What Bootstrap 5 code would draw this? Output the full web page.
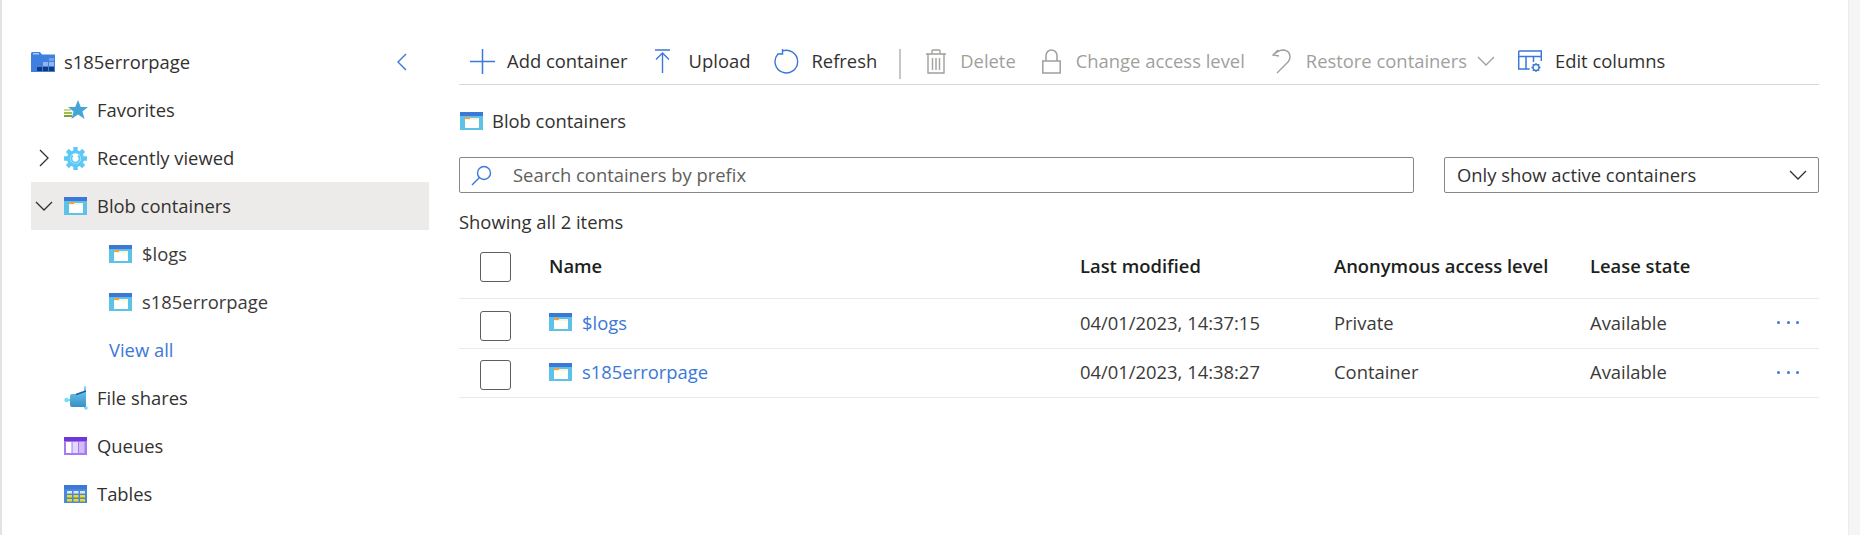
<!DOCTYPE html>
<html lang="en"><head><meta charset="utf-8"><title>Blob containers</title>
<link href="https://cdn.jsdelivr.net/npm/bootstrap@5.3.0/dist/css/bootstrap.min.css" rel="stylesheet">
<style>
html,body{height:100%}
body{font-family:"Open Sans","Noto Sans","Liberation Sans",sans-serif;font-size:18.4px;color:#323130;background:#fff;overflow:hidden}
.shell{height:535px;border-left:2px solid #e3e3e3;border-right:11px solid #f5f5f5;box-shadow:inset -1px 0 #ececec}
.side{width:398px;margin-left:29px;padding-top:38px;flex:none}
.side-row{height:48px}
.side-row svg.ic{flex:none}
.caret{width:33px;flex:none;display:flex;justify-content:center;padding-right:7px}
.lbl{margin-left:10px;color:#323130}
.lbl-wide{margin-left:9px}
.head-lbl{margin-left:9px}
.lv2{padding-left:78px}
.lv2 .lbl{color:#3b3a39}
.sel{background:#edebe9}
.blue{color:#3b78d8;text-decoration:none}
.main{width:1360px;margin-left:30px;flex:none}
.tbar{height:85px;border-bottom:1px solid #d8d8d8;padding-top:42px;padding-left:11px}
.tb{display:flex;align-items:center;height:38px;white-space:nowrap;color:#323130}
.off{color:#a19f9d}
.vsep{width:2px;height:30px;background:#c8c6c4;flex:none;margin:7px 0 0 22px}
.crumb{height:72px}
.crumb svg{margin-left:1px}
.crumb span{margin-left:9px}
.fieldbox{height:36px;border:1px solid #8a8886;border-radius:2px;background:#fff}
.srch{width:955px;padding-left:11px}
.srch span{color:#605e5c;margin-left:21px}
.drop{width:375px;margin-left:30px;padding:0 11px 0 12px}
.count{height:50px;padding-top:15px}
.gridrow{display:grid;grid-template-columns:90px 531px 254px 256px 187px 42px;align-items:center;border-bottom:1px solid #edebe9}
.ghead{height:56px;font-weight:600;padding-bottom:7px}
.grow1{height:50px}
.grow2{height:49px}
.gridrow>div{white-space:nowrap;color:#3b3a39}
.gridrow>div:not(:first-child){padding-bottom:2px}
.ghead>div{color:#201f1e}
.chk{width:31px;height:30px;border:1px solid #605e5c;border-radius:3px;margin-left:21px;display:block}
.grow1 .chk,.grow2 .chk{margin-top:4px}
.gridrow>.dots{display:flex;gap:6.500px;align-items:flex-start;padding-bottom:4px}
.dots i{width:3px;height:3px;border-radius:50%;background:#3b78d8;display:block}
</style></head><body>
<svg width="0" height="0" class="d-block" aria-hidden="true"><defs>
<symbol id="blob" viewBox="0 0 23 18"><rect width="23" height="18" fill="#5cc2e8"/><rect width="23" height="4" fill="#3b78d8"/><rect x="5" y="6" width="14" height="10" fill="#fff"/><rect x="5" y="6" width="14" height="2" fill="#fdf3d8"/><rect x="5" y="5" width="5" height="2" fill="#f2a33a"/></symbol>
<linearGradient id="fsg" x1="0" y1="0" x2="0" y2="1"><stop offset="0" stop-color="#62c3ec"/><stop offset="1" stop-color="#3a8fc4"/></linearGradient>
</defs></svg>
<div class="shell d-flex">
 <aside class="side">
  <div class="side-row d-flex align-items-center">
   <svg class="ic" width="24" height="20" viewBox="0 0 24 20"><path d="M0 1.500Q0 0 1.500 0H9l2 2.500H24V20H0z" fill="#3f7fe0"/><rect x="2" y="1" width="6" height="1.500" fill="#a9cbf5"/><rect x="6" y="15" width="5" height="4" fill="#123a78"/><rect x="12" y="15" width="5" height="4" fill="#123a78"/><rect x="18" y="15" width="5" height="4" fill="#123a78"/><rect x="12" y="10" width="5" height="4" fill="#8fb6ee"/><rect x="18" y="10" width="5" height="4" fill="#8fb6ee"/><rect x="18" y="6" width="5" height="3" fill="#6fa0e8"/></svg>
   <span class="head-lbl">s185errorpage</span>
   <svg class="ms-auto" width="11" height="18" viewBox="0 0 11 18" style="margin-right:22px"><path d="M10 1 2 9l8 8" fill="none" stroke="#3b78d8" stroke-width="1.400"/></svg>
  </div>
  <div class="side-row d-flex align-items-center">
   <span class="caret"></span><svg class="ic" width="24" height="20" viewBox="0 0 24 20"><path d="M14 0l2.800 7H24l-5.600 4.600 2.200 7.400-6.600-4.400L7.400 19l2.200-7.400L4 7h7.200z" fill="#46a5d6"/><rect x="0" y="9" width="7" height="2" fill="#c8dc8c"/><rect x="0" y="12" width="8" height="2" fill="#9cc04e"/><rect x="0" y="15" width="8" height="2" fill="#7fa03a"/></svg><span class="lbl lbl-wide">Favorites</span>
  </div>
  <div class="side-row d-flex align-items-center">
   <span class="caret"><svg width="11" height="18" viewBox="0 0 11 18"><path d="M1 1l8 8-8 8" fill="none" stroke="#323130" stroke-width="1.300"/></svg></span><svg class="ic" width="23" height="23" viewBox="0 0 24 24"><g stroke="#5cc8f5" stroke-width="4.500"><path d="M12 0v24M0 12h24M3.500 3.500l17 17M20.500 3.500l-17 17"/></g><circle cx="12" cy="12" r="9" fill="#5cc8f5"/><circle cx="12" cy="12" r="5.600" fill="#fff"/><path d="M9.200 8.800a4.300 4.300 0 1 0 5.600 0" fill="none" stroke="#5cc8f5" stroke-width="2"/></svg><span class="lbl">Recently viewed</span>
  </div>
  <div class="side-row sel d-flex align-items-center">
   <span class="caret"><svg width="18" height="11" viewBox="0 0 18 11" class="flex-shrink-0"><path d="M1 1l8 8 8-8" fill="none" stroke="#323130" stroke-width="1.300"/></svg></span><svg class="ic" width="23" height="18"><use href="#blob"/></svg><span class="lbl">Blob containers</span>
  </div>
  <div class="side-row lv2 d-flex align-items-center"><svg class="ic" width="23" height="18"><use href="#blob"/></svg><span class="lbl">$logs</span></div>
  <div class="side-row lv2 d-flex align-items-center"><svg class="ic" width="23" height="18"><use href="#blob"/></svg><span class="lbl">s185errorpage</span></div>
  <div class="side-row lv2 d-flex align-items-center"><a class="blue" href="#">View all</a></div>
  <div class="side-row d-flex align-items-center">
   <span class="caret"></span><svg class="ic" width="24" height="24" viewBox="0 0 24 24"><path d="M2.500 14H7" stroke="#2a8fc8" stroke-width="1"/><path d="M21 2v5M21 20v2" stroke="#2a6fb0" stroke-width="1"/><path d="M6 10q0-2 2-2h5l9-3v16H8q-2 0-2-2z" fill="url(#fsg)"/><path d="M12 8.500l10-3.500" stroke="#1c5fa8" stroke-width="1.500"/><circle cx="2.500" cy="14" r="2.200" fill="#6fdcf8"/><circle cx="22" cy="22" r="1.800" fill="#6fdcf8"/><circle cx="21" cy="1.500" r="1.300" fill="#6fdcf8"/></svg><span class="lbl lbl-wide">File shares</span>
  </div>
  <div class="side-row d-flex align-items-center">
   <span class="caret"></span><svg class="ic" width="23" height="18" viewBox="0 0 23 18"><rect width="23" height="18" fill="#a67af0"/><rect width="23" height="4" fill="#6f36d8"/><rect x="2" y="5" width="5.500" height="11" fill="#fff"/><rect x="8.500" y="5" width="5.500" height="11" fill="#e4d8fb"/><rect x="15" y="5" width="5.500" height="11" fill="#d0bdf7"/></svg><span class="lbl">Queues</span>
  </div>
  <div class="side-row d-flex align-items-center">
   <span class="caret"></span><svg class="ic" width="23" height="18" viewBox="0 0 23 18"><rect width="23" height="18" fill="#4a88dc"/><rect width="23" height="4" fill="#3b78d8"/><g fill="#dbe8fa"><rect x="3" y="6" width="5" height="2.500"/><rect x="9.500" y="6" width="5" height="2.500"/><rect x="16" y="6" width="5" height="2.500"/></g><g fill="#f5d90a"><rect x="3" y="10" width="5" height="2.500"/><rect x="9.500" y="10" width="5" height="2.500"/><rect x="16" y="10" width="5" height="2.500"/><rect x="3" y="14" width="5" height="2.500"/><rect x="9.500" y="14" width="5" height="2.500"/><rect x="16" y="14" width="5" height="2.500"/></g></svg><span class="lbl">Tables</span>
  </div>
 </aside>
 <main class="main">
  <div class="tbar d-flex align-items-start">
   <div class="tb"><svg width="25" height="25" viewBox="0 0 25 25"><path d="M12.500 0v25M0 12.500h25" stroke="#3b78d8" stroke-width="1.500"/></svg><span class="ms-2 ps-1">Add container</span></div>
   <div class="tb" style="margin-left:27px"><svg width="15" height="25" viewBox="0 0 15 25"><path d="M0 1h15M7.500 24V4M1 10.500l6.500-6.500 6.500 6.500" fill="none" stroke="#3b78d8" stroke-width="1.400"/></svg><span style="margin-left:19px">Upload</span></div>
   <div class="tb" style="margin-left:24px"><svg width="25" height="25" viewBox="0 0 25 25"><path d="M8 2.200a11.300 11.300 0 1 1-4 2.800M8.500 0v5H3.500" fill="none" stroke="#3b78d8" stroke-width="1.400"/></svg><span style="margin-left:12px">Refresh</span></div>
   <div class="vsep"></div>
   <div class="tb off" style="margin-left:25px"><svg width="20" height="25" viewBox="0 0 20 25"><path d="M0 5h20M6 5V2q0-1 1-1h6q1 0 1 1v3M2 5v19h16V5M6.500 9v12M10 9v12M13.500 9v12" fill="none" stroke="#a19f9d" stroke-width="1.400"/></svg><span style="margin-left:14px">Delete</span></div>
   <div class="tb off" style="margin-left:26px"><svg width="19" height="25" viewBox="0 0 19 25"><path d="M.8 12h17.400v12H.8zM4 12V6.500a5.500 5.500 0 0 1 11 0V12" fill="none" stroke="#a19f9d" stroke-width="1.500"/></svg><span style="margin-left:15px">Change access level</span></div>
   <div class="tb off" style="margin-left:27px"><svg width="19" height="25" viewBox="0 0 19 25"><path d="M6 1L1 6l6 1M1 6q5-5 11-5 6 1 6 7 0 3-2 5L5 24" fill="none" stroke="#a19f9d" stroke-width="1.400"/></svg><span style="margin-left:15px">Restore containers</span><svg style="margin-left:10px" width="18" height="10" viewBox="0 0 18 10"><path d="M1 1l8 8 8-8" fill="none" stroke="#a19f9d" stroke-width="1.300"/></svg></div>
   <div class="tb" style="margin-left:23px"><svg width="24" height="23" viewBox="0 0 24 23"><path d="M.7 1h22.600v10M.7 1v18h11M.7 6.500h22.600M8 6.500V19M15.500 6.500V12" fill="none" stroke="#3b78d8" stroke-width="1.500"/><path d="M18 13v9M13.500 17.500h9M14.800 14.300l6.400 6.400M21.200 14.300l-6.400 6.400" stroke="#3b78d8" stroke-width="1.300"/><circle cx="18" cy="17.500" r="3" fill="#fff" stroke="#3b78d8" stroke-width="1.400"/></svg><span style="margin-left:13px">Edit columns</span></div>
  </div>
  <div class="crumb d-flex align-items-center"><svg width="23" height="18"><use href="#blob"/></svg><span>Blob containers</span></div>
  <div class="d-flex">
   <div class="fieldbox srch d-flex align-items-center"><svg width="21" height="21" viewBox="0 0 21 21"><circle cx="13" cy="8" r="6.500" fill="none" stroke="#3b78d8" stroke-width="1.400"/><path d="M8.500 12.500L1 20" stroke="#3b78d8" stroke-width="1.500"/></svg><span>Search containers by prefix</span></div>
   <div class="fieldbox drop d-flex align-items-center justify-content-between"><span>Only show active containers</span><svg width="18" height="10" viewBox="0 0 18 10"><path d="M1 1l8 8 8-8" fill="none" stroke="#323130" stroke-width="1.300"/></svg></div>
  </div>
  <div class="count">Showing all 2 items</div>
  <div class="gridrow ghead"><div><span class="chk"></span></div><div>Name</div><div>Last modified</div><div>Anonymous access level</div><div>Lease state</div><div></div></div>
  <div class="gridrow grow1"><div><span class="chk"></span></div><div class="d-flex align-items-center"><svg width="23" height="18"><use href="#blob"/></svg><a class="blue" href="#" style="margin-left:10px">$logs</a></div><div>04/01/2023, 14:37:15</div><div>Private</div><div>Available</div><div class="dots"><i></i><i></i><i></i></div></div>
  <div class="gridrow grow2"><div><span class="chk"></span></div><div class="d-flex align-items-center"><svg width="23" height="18"><use href="#blob"/></svg><a class="blue" href="#" style="margin-left:10px">s185errorpage</a></div><div>04/01/2023, 14:38:27</div><div>Container</div><div>Available</div><div class="dots"><i></i><i></i><i></i></div></div>
 </main>
</div>
<script src="https://cdn.jsdelivr.net/npm/bootstrap@5.3.0/dist/js/bootstrap.bundle.min.js"></script>
</body></html>
